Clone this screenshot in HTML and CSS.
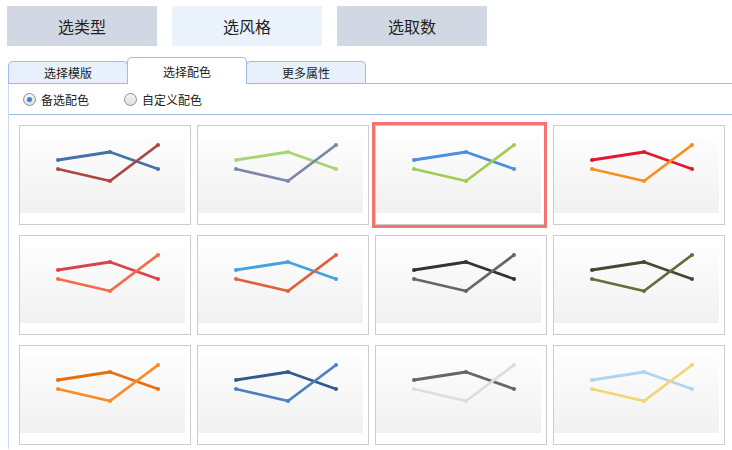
FILE: index.html
```html
<!DOCTYPE html>
<html lang="zh-CN">
<head>
    <meta charset="UTF-8">
    <title>选风格</title>
    <link rel="stylesheet" href="styles.css">
</head>
<body>
    <svg class="defs" width="0" height="0">
        <defs>
            <linearGradient id="thumbBg" x1="0" y1="0" x2="0" y2="1">
                <stop offset="0" stop-color="#fdfdfd"/>
                <stop offset="1" stop-color="#f1f1f1"/>
            </linearGradient>
        </defs>
    </svg>

    <!-- Steps -->
    <div class="steps">
        <div class="step">选类型</div>
        <div class="step step-current">选风格</div>
        <div class="step">选取数</div>
    </div>

    <!-- Tabs -->
    <div class="tabs">
        <div class="tab">选择模版</div>
        <div class="tab tab-active">选择配色</div>
        <div class="tab">更多属性</div>
    </div>

    <div class="panel">
        <div class="radio-row">
            <label class="radio"><span class="radio-dot checked"></span>备选配色</label>
            <label class="radio"><span class="radio-dot"></span>自定义配色</label>
        </div>

        <div class="palette-grid">
            <div class="card">
                <svg class="thumb" width="165" height="88"><rect y="11" width="165" height="76" fill="url(#thumbBg)"/>
                    <g fill="#4572a7" stroke="#4572a7"><polyline points="38,34 90,26 138,43"/><circle cx="38" cy="34" r="2"/><circle cx="90" cy="26" r="2"/><circle cx="138" cy="43" r="2"/></g>
                    <g fill="#aa4643" stroke="#aa4643"><polyline points="38,43 90,55 138,19"/><circle cx="38" cy="43" r="2"/><circle cx="90" cy="55" r="2"/><circle cx="138" cy="19" r="2"/></g>
                </svg>
            </div>
            <div class="card">
                <svg class="thumb" width="165" height="88"><rect y="11" width="165" height="76" fill="url(#thumbBg)"/>
                    <g fill="#a6d672" stroke="#a6d672"><polyline points="38,34 90,26 138,43"/><circle cx="38" cy="34" r="2"/><circle cx="90" cy="26" r="2"/><circle cx="138" cy="43" r="2"/></g>
                    <g fill="#7c87a6" stroke="#7c87a6"><polyline points="38,43 90,55 138,19"/><circle cx="38" cy="43" r="2"/><circle cx="90" cy="55" r="2"/><circle cx="138" cy="19" r="2"/></g>
                </svg>
            </div>
            <div class="card card-selected">
                <svg class="thumb" width="165" height="88"><rect y="11" width="165" height="76" fill="url(#thumbBg)"/>
                    <g fill="#4a90dd" stroke="#4a90dd"><polyline points="38,34 90,26 138,43"/><circle cx="38" cy="34" r="2"/><circle cx="90" cy="26" r="2"/><circle cx="138" cy="43" r="2"/></g>
                    <g fill="#a2cc52" stroke="#a2cc52"><polyline points="38,43 90,55 138,19"/><circle cx="38" cy="43" r="2"/><circle cx="90" cy="55" r="2"/><circle cx="138" cy="19" r="2"/></g>
                </svg>
            </div>
            <div class="card">
                <svg class="thumb" width="165" height="88"><rect y="11" width="165" height="76" fill="url(#thumbBg)"/>
                    <g fill="#e3172e" stroke="#e3172e"><polyline points="38,34 90,26 138,43"/><circle cx="38" cy="34" r="2"/><circle cx="90" cy="26" r="2"/><circle cx="138" cy="43" r="2"/></g>
                    <g fill="#f7911e" stroke="#f7911e"><polyline points="38,43 90,55 138,19"/><circle cx="38" cy="43" r="2"/><circle cx="90" cy="55" r="2"/><circle cx="138" cy="19" r="2"/></g>
                </svg>
            </div>

            <div class="card">
                <svg class="thumb" width="165" height="88"><rect y="11" width="165" height="76" fill="url(#thumbBg)"/>
                    <g fill="#d9434b" stroke="#d9434b"><polyline points="38,34 90,26 138,43"/><circle cx="38" cy="34" r="2"/><circle cx="90" cy="26" r="2"/><circle cx="138" cy="43" r="2"/></g>
                    <g fill="#f26d45" stroke="#f26d45"><polyline points="38,43 90,55 138,19"/><circle cx="38" cy="43" r="2"/><circle cx="90" cy="55" r="2"/><circle cx="138" cy="19" r="2"/></g>
                </svg>
            </div>
            <div class="card">
                <svg class="thumb" width="165" height="88"><rect y="11" width="165" height="76" fill="url(#thumbBg)"/>
                    <g fill="#44a2df" stroke="#44a2df"><polyline points="38,34 90,26 138,43"/><circle cx="38" cy="34" r="2"/><circle cx="90" cy="26" r="2"/><circle cx="138" cy="43" r="2"/></g>
                    <g fill="#e0603c" stroke="#e0603c"><polyline points="38,43 90,55 138,19"/><circle cx="38" cy="43" r="2"/><circle cx="90" cy="55" r="2"/><circle cx="138" cy="19" r="2"/></g>
                </svg>
            </div>
            <div class="card">
                <svg class="thumb" width="165" height="88"><rect y="11" width="165" height="76" fill="url(#thumbBg)"/>
                    <g fill="#333333" stroke="#333333"><polyline points="38,34 90,26 138,43"/><circle cx="38" cy="34" r="2"/><circle cx="90" cy="26" r="2"/><circle cx="138" cy="43" r="2"/></g>
                    <g fill="#666666" stroke="#666666"><polyline points="38,43 90,55 138,19"/><circle cx="38" cy="43" r="2"/><circle cx="90" cy="55" r="2"/><circle cx="138" cy="19" r="2"/></g>
                </svg>
            </div>
            <div class="card">
                <svg class="thumb" width="165" height="88"><rect y="11" width="165" height="76" fill="url(#thumbBg)"/>
                    <g fill="#4a4630" stroke="#4a4630"><polyline points="38,34 90,26 138,43"/><circle cx="38" cy="34" r="2"/><circle cx="90" cy="26" r="2"/><circle cx="138" cy="43" r="2"/></g>
                    <g fill="#6b6a3c" stroke="#6b6a3c"><polyline points="38,43 90,55 138,19"/><circle cx="38" cy="43" r="2"/><circle cx="90" cy="55" r="2"/><circle cx="138" cy="19" r="2"/></g>
                </svg>
            </div>

            <div class="card">
                <svg class="thumb" width="165" height="88"><rect y="11" width="165" height="76" fill="url(#thumbBg)"/>
                    <g fill="#e5700f" stroke="#e5700f"><polyline points="38,34 90,26 138,43"/><circle cx="38" cy="34" r="2"/><circle cx="90" cy="26" r="2"/><circle cx="138" cy="43" r="2"/></g>
                    <g fill="#fa8b24" stroke="#fa8b24"><polyline points="38,43 90,55 138,19"/><circle cx="38" cy="43" r="2"/><circle cx="90" cy="55" r="2"/><circle cx="138" cy="19" r="2"/></g>
                </svg>
            </div>
            <div class="card">
                <svg class="thumb" width="165" height="88"><rect y="11" width="165" height="76" fill="url(#thumbBg)"/>
                    <g fill="#2f5b91" stroke="#2f5b91"><polyline points="38,34 90,26 138,43"/><circle cx="38" cy="34" r="2"/><circle cx="90" cy="26" r="2"/><circle cx="138" cy="43" r="2"/></g>
                    <g fill="#4c80c1" stroke="#4c80c1"><polyline points="38,43 90,55 138,19"/><circle cx="38" cy="43" r="2"/><circle cx="90" cy="55" r="2"/><circle cx="138" cy="19" r="2"/></g>
                </svg>
            </div>
            <div class="card">
                <svg class="thumb" width="165" height="88"><rect y="11" width="165" height="76" fill="url(#thumbBg)"/>
                    <g fill="#666666" stroke="#666666"><polyline points="38,34 90,26 138,43"/><circle cx="38" cy="34" r="2"/><circle cx="90" cy="26" r="2"/><circle cx="138" cy="43" r="2"/></g>
                    <g fill="#dddddd" stroke="#dddddd"><polyline points="38,43 90,55 138,19"/><circle cx="38" cy="43" r="2"/><circle cx="90" cy="55" r="2"/><circle cx="138" cy="19" r="2"/></g>
                </svg>
            </div>
            <div class="card">
                <svg class="thumb" width="165" height="88"><rect y="11" width="165" height="76" fill="url(#thumbBg)"/>
                    <g fill="#b0d5ee" stroke="#b0d5ee"><polyline points="38,34 90,26 138,43"/><circle cx="38" cy="34" r="2"/><circle cx="90" cy="26" r="2"/><circle cx="138" cy="43" r="2"/></g>
                    <g fill="#f2d575" stroke="#f2d575"><polyline points="38,43 90,55 138,19"/><circle cx="38" cy="43" r="2"/><circle cx="90" cy="55" r="2"/><circle cx="138" cy="19" r="2"/></g>
                </svg>
            </div>
        </div>
    </div>
</body>
</html>
```

FILE: styles.css
```css
body {
    margin: 0;
    font-family: "Noto Sans CJK SC", "Noto Sans", sans-serif;
    color: #222;
    background: #fff;
}
.defs { position: absolute; width: 0; height: 0; }

/* Steps */
.steps {
    display: flex;
    gap: 15px;
    padding: 6px 0 0 7px;
}
.step {
    width: 150px;
    height: 40px;
    line-height: 40px;
    text-align: center;
    font-size: 16px;
    background-color: #d1d8e3;
}
.step-current { background-color: #eaf2fb; }

/* Tabs */
.tabs {
    display: flex;
    align-items: flex-end;
    height: 26px;
    margin: 11px 0 0 8px;
    border-bottom: 1px solid #99bbe4;
}
.tab {
    width: 118px;
    height: 21px;
    line-height: 21px;
    text-align: center;
    font-size: 12px;
    background-color: #e8f1fb;
    border: 1px solid #9dbde6;
    border-bottom: none;
    border-radius: 5px 5px 0 0;
}
.tab + .tab { margin-left: -1px; }
.tab-active {
    height: 26px;
    line-height: 28px;
    background-color: #fff;
    margin-bottom: -1px;
    position: relative;
}

/* Panel */
.panel {
    margin-left: 8px;
    border-left: 1px solid #cbdcf1;
    padding-bottom: 4px;
}
.radio-row {
    display: flex;
    align-items: center;
    height: 30px;
    padding-left: 14px;
    border-bottom: 1px solid #99bbe4;
    font-size: 12px;
}
.radio {
    display: flex;
    align-items: center;
    gap: 5px;
    margin-right: 35px;
}
.radio-dot {
    width: 11px;
    height: 11px;
    border: 1px solid #8f8f8f;
    border-radius: 50%;
    background: linear-gradient(#f4f4f4, #dedede);
    display: flex;
    align-items: center;
    justify-content: center;
}
.radio-dot.checked::after {
    content: "";
    width: 5px;
    height: 5px;
    border-radius: 50%;
    background-color: #2f86e0;
}

/* Palette cards */
.palette-grid {
    display: grid;
    grid-template-columns: repeat(4, 172px);
    column-gap: 6px;
    row-gap: 10px;
    padding: 10px 0 0 10px;
}
.card {
    height: 98px;
    border: 1px solid #cccccc;
    background: #fff;
}
.card-selected { position: relative; }
.card-selected::after {
    content: "";
    position: absolute;
    top: -4px;
    left: -4px;
    right: -1px;
    bottom: -4px;
    border: 3px solid #f47373;
}
.thumb { display: block; }
.thumb polyline { fill: none; stroke-width: 2.8; stroke-linejoin: round; }
.thumb circle { stroke: none; }
```
